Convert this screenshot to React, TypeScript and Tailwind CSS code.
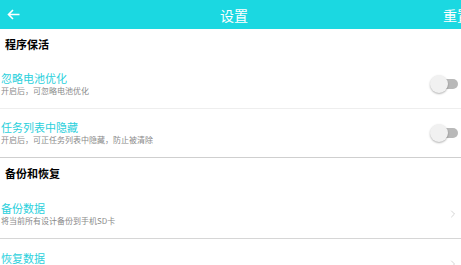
import { ChevronRight } from 'lucide-react'

const font = { fontFamily: '"Noto Sans CJK SC", "Noto Sans", sans-serif' }

function Toggle() {
  return (
    <div className="relative h-[18px] w-[28px] shrink-0">
      <div className="absolute left-[10px] top-[4px] h-[10px] w-[18px] rounded-full bg-[#b9b9b9]" />
      <div className="absolute left-0 top-0 h-[18px] w-[18px] rounded-full bg-[#f1f1f1] shadow-[0_1px_2px_rgba(0,0,0,0.3)]" />
    </div>
  )
}

function Row({
  title,
  desc,
  right,
  border = 'border-[#eeeeee]',
  h = 'h-[50px]',
}: {
  title: string
  desc?: string
  right: 'toggle' | 'chevron'
  border?: string
  h?: string
}) {
  return (
    <div className={`flex ${h} items-center border-b ${border} pl-px pr-[3px]`}>
      <div className="flex flex-1 flex-col">
        <span className="text-[11px] leading-[14px] text-[#2ad0dc]">{title}</span>
        {desc && <span className="text-[8px] leading-[12px] text-[#8a8a8a]">{desc}</span>}
      </div>
      {right === 'toggle' ? (
        <Toggle />
      ) : (
        <ChevronRight size={12} strokeWidth={1.3} className="-mr-[1px] text-[#bdbdbd]" />
      )}
    </div>
  )
}

export default function App() {
  return (
    <div className="h-[265px] w-[461px] overflow-hidden bg-white" style={font}>
      <header className="flex h-[29px] items-center overflow-hidden whitespace-nowrap bg-[#1bd8e1] text-white">
        <svg width="13" height="11" viewBox="0 0 13 11" className="ml-[7px] shrink-0" fill="none" stroke="white" strokeWidth="1.6">
          <path d="M12.5 5.5H1.5M6 1L1.5 5.5L6 10" />
        </svg>
        <span className="ml-[200px] text-[14px] leading-none">设置</span>
        <span className="ml-[195px] text-[14px] leading-none">重置</span>
      </header>
      <div className="flex h-[30px] items-center pl-[5px] text-[11px] font-bold text-black">程序保活</div>
      <Row title="忽略电池优化" desc="开启后，可忽略电池优化" right="toggle" />
      <Row title="任务列表中隐藏" desc="开启后，可正任务列表中隐藏，防止被清除" right="toggle" border="border-[#cfcfcf]" h="h-[49px]" />
      <div className="flex h-[31px] items-center pl-[5px] text-[11px] font-bold text-black">备份和恢复</div>
      <Row title="备份数据" desc="将当前所有设计备份到手机SD卡" right="chevron" border="border-[#d6d6d6]" h="h-[50px]" />
      <Row title="恢复数据" desc="从手机SD卡恢复备份数据" right="chevron" />
    </div>
  )
}
